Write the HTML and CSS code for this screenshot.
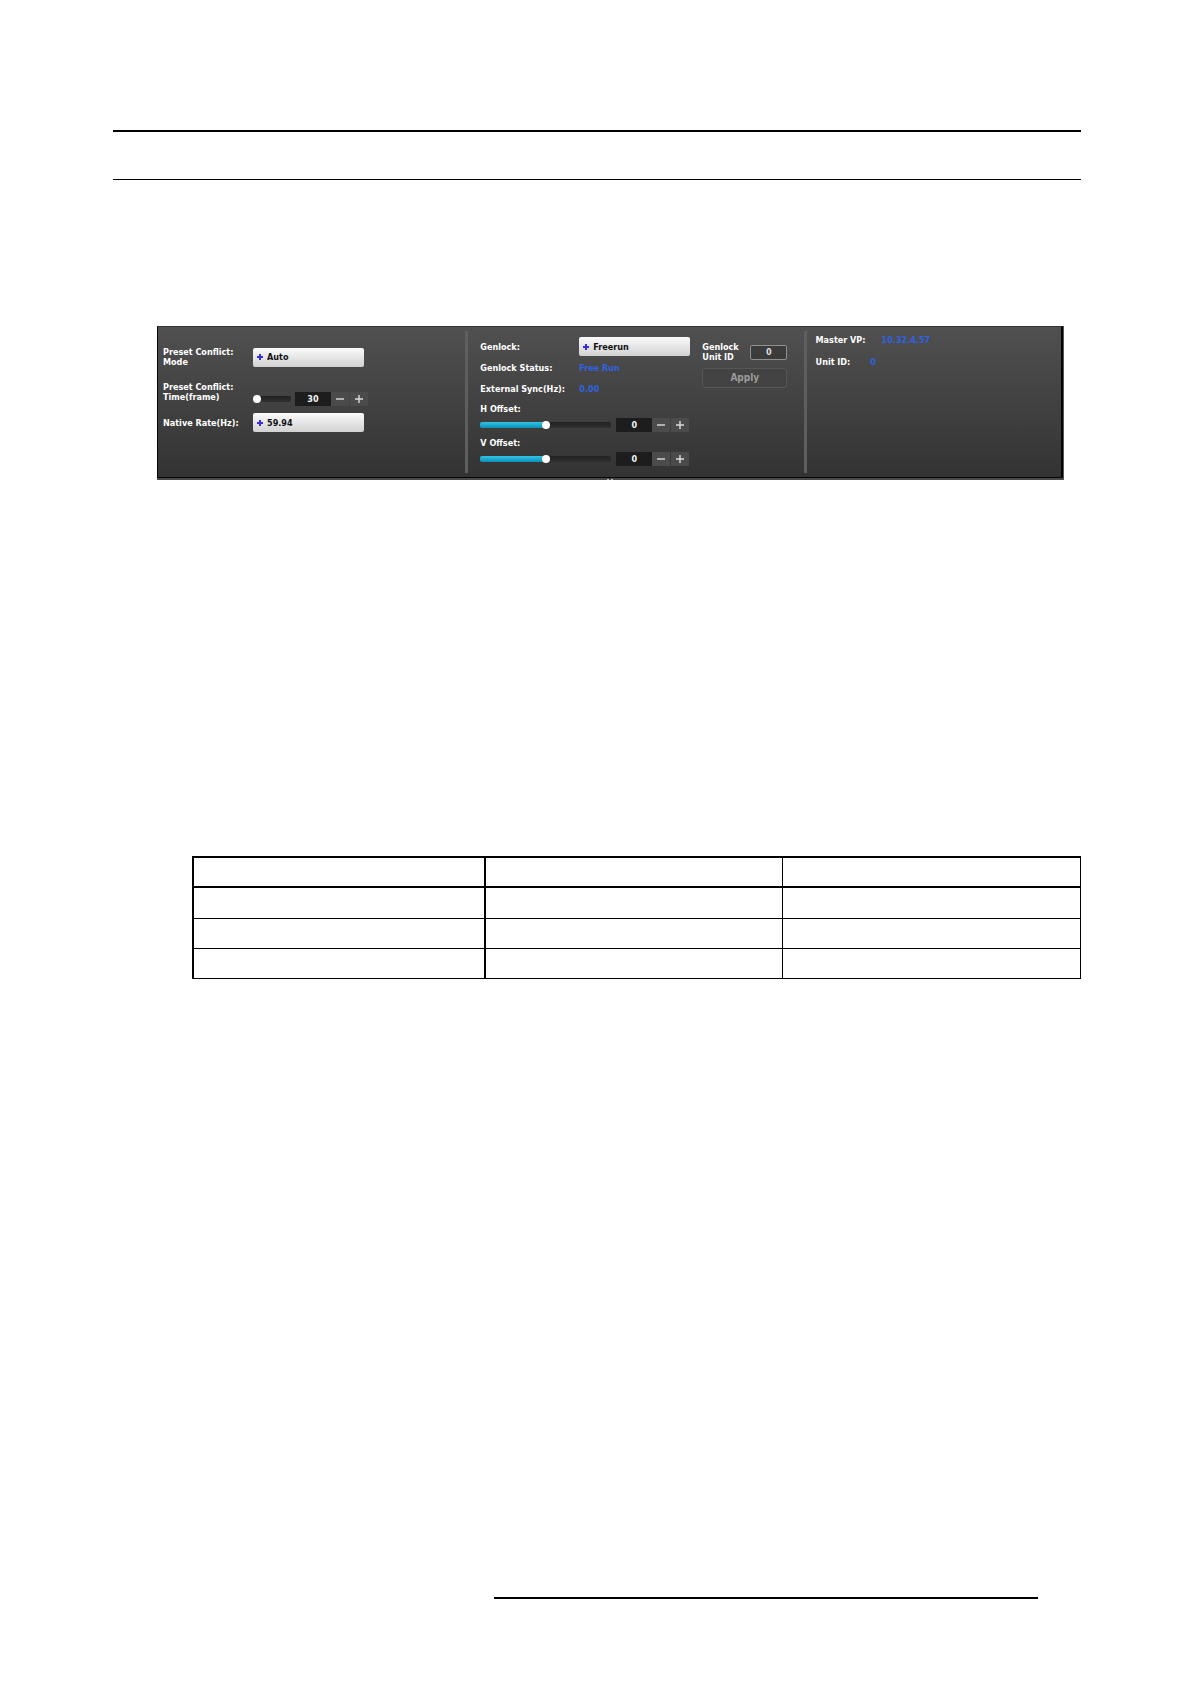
FILE: index.html
```html
<!DOCTYPE html>
<html lang="en">
<head>
    <meta charset="UTF-8">
    <meta name="viewport" content="width=device-width, initial-scale=1.0">
    <title>Genlock Settings</title>
    <link rel="stylesheet" href="styles.css">
</head>
<body>
    <header class="page-header"></header>

    <main>
        <section class="panel">
            <div class="columns">
                <div class="column preset">
                    <div class="row">
                        <label for="conflictMode">Preset Conflict:<br>Mode</label>
                        <div class="dropdown">
                            <svg class="plus" viewBox="0 0 6 6"><path d="M3 0v6M0 3h6"/></svg>
                            <select id="conflictMode"><option>Auto</option></select>
                        </div>
                    </div>
                    <div class="row row-time">
                        <label for="conflictTime">Preset Conflict:<br>Time(frame)</label>
                        <div class="stepper">
                            <input type="range" class="slider slider-short" min="0" max="100" value="0" aria-label="Preset conflict time">
                            <input type="text" class="number" id="conflictTime" value="30">
                            <button class="step" aria-label="Decrease"><svg viewBox="0 0 8 8"><path d="M0 4h8"/></svg></button>
                            <button class="step" aria-label="Increase"><svg viewBox="0 0 8 8"><path d="M0 4h8M4 0v8"/></svg></button>
                        </div>
                    </div>
                    <div class="row">
                        <label for="nativeRate">Native Rate(Hz):</label>
                        <div class="dropdown">
                            <svg class="plus" viewBox="0 0 6 6"><path d="M3 0v6M0 3h6"/></svg>
                            <select id="nativeRate"><option>59.94</option></select>
                        </div>
                    </div>
                </div>

                <div class="column genlock">
                    <div class="genlock-main">
                        <div class="row">
                            <label for="genlock">Genlock:</label>
                            <div class="dropdown">
                                <svg class="plus" viewBox="0 0 6 6"><path d="M3 0v6M0 3h6"/></svg>
                                <select id="genlock"><option>Freerun</option></select>
                            </div>
                        </div>
                        <div class="row">
                            <span>Genlock Status:</span>
                            <span class="value">Free Run</span>
                        </div>
                        <div class="row">
                            <span>External Sync(Hz):</span>
                            <span class="value">0.00</span>
                        </div>
                        <div class="offset">
                            <label for="hOffset">H Offset:</label>
                            <div class="stepper">
                                <input type="range" class="slider slider-half" min="0" max="100" value="50" aria-label="H offset slider">
                                <input type="text" class="number" id="hOffset" value="0">
                                <button class="step" aria-label="Decrease"><svg viewBox="0 0 8 8"><path d="M0 4h8"/></svg></button>
                                <button class="step" aria-label="Increase"><svg viewBox="0 0 8 8"><path d="M0 4h8M4 0v8"/></svg></button>
                            </div>
                        </div>
                        <div class="offset">
                            <label for="vOffset">V Offset:</label>
                            <div class="stepper">
                                <input type="range" class="slider slider-half" min="0" max="100" value="50" aria-label="V offset slider">
                                <input type="text" class="number" id="vOffset" value="0">
                                <button class="step" aria-label="Decrease"><svg viewBox="0 0 8 8"><path d="M0 4h8"/></svg></button>
                                <button class="step" aria-label="Increase"><svg viewBox="0 0 8 8"><path d="M0 4h8M4 0v8"/></svg></button>
                            </div>
                        </div>
                    </div>
                    <div class="unit">
                        <div class="unit-id">
                            <label for="unitId">Genlock<br>Unit ID</label>
                            <input type="text" class="unit-input" id="unitId" value="0">
                        </div>
                        <button class="apply" disabled>Apply</button>
                    </div>
                </div>

                <div class="column master">
                    <div class="info">
                        <span>Master VP:</span>
                        <span class="value">10.32.4.57</span>
                    </div>
                    <div class="info">
                        <span>Unit ID:</span>
                        <span class="value">0</span>
                    </div>
                </div>
            </div>
            <div class="grip">
                <svg viewBox="0 0 6 2"><path d="M0 2l1-1 1 1M4 2l1-1 1 1"/></svg>
            </div>
        </section>

        <table class="grid-table">
            <thead>
                <tr><th></th><th></th><th></th></tr>
            </thead>
            <tbody>
                <tr><td></td><td></td><td></td></tr>
                <tr><td></td><td></td><td></td></tr>
                <tr><td></td><td></td><td></td></tr>
            </tbody>
        </table>
    </main>

    <footer class="page-footer"></footer>
</body>
</html>
```
FILE: styles.css
```css
* {
    box-sizing: border-box;
}

body {
    margin: 0;
    padding: 130px 109px 85px 113px;
    min-height: 100vh;
    display: flex;
    flex-direction: column;
    background-color: white;
    font-family: "DejaVu Sans Condensed", "DejaVu Sans", sans-serif;
    font-size: 9px;
    font-weight: bold;
    line-height: 10px;
}

input, select, button {
    font: inherit;
    margin: 0;
    padding: 0;
}

.page-header {
    height: 50px;
    border-top: 2px solid black;
    border-bottom: 1px solid black;
}

.page-footer {
    margin: auto 43px 0 381px;
    border-top: 2px solid black;
}

/* Settings panel */
.panel {
    margin: 146px 17px 0 44px;
    background-color: #4a4a4a;
    border-right: 1px solid #555;
    color: #fff;
}

.columns {
    display: grid;
    grid-template-columns: 311fr 339fr 255fr;
    padding-bottom: 4px;
    background: linear-gradient(#505050, #333);
    border: 1px solid #333;
    border-right: 2px solid #050505;
    border-bottom: 1px solid #050505;
    border-left-color: #050505;
}

.column {
    margin-top: 4px;
    height: 142px;
}

.preset,
.genlock {
    border-right: 3px solid #5e5e5e;
}

.preset {
    padding: 16px 0 0 5px;
}

.row {
    display: grid;
    grid-template-columns: 90px 111px;
    align-items: center;
}

.row-time {
    align-items: start;
    margin: 15px 0 7px;
}

.row-time .stepper {
    margin-top: 10px;
}

.dropdown {
    display: flex;
    align-items: center;
    height: 19px;
    padding-left: 4px;
    border-radius: 2px;
    background: linear-gradient(#fafafa, #d2d2d2);
}

.plus {
    width: 6px;
    height: 6px;
    stroke: #3a2fe0;
    stroke-width: 2;
}

.dropdown select {
    flex: 1;
    height: 100%;
    padding-left: 4px;
    appearance: none;
    border: none;
    background: none;
    color: #111;
}

.value {
    color: #2f62e0;
}

/* Slider with number box and buttons */
.stepper {
    display: flex;
    align-items: center;
    height: 14px;
}

.slider {
    appearance: none;
    width: 131px;
    height: 6px;
    margin-right: 5px;
    flex-shrink: 0;
    border-radius: 2px;
    background: linear-gradient(#222, #303030);
}

.slider-short {
    width: 38px;
    margin-right: 4px;
}

.slider-half {
    background:
        linear-gradient(#35c3e6, #0a8fb5) left / 50% 100% no-repeat,
        linear-gradient(#222, #303030);
}

.slider::-webkit-slider-thumb {
    appearance: none;
    width: 8px;
    height: 8px;
    border-radius: 50%;
    background-color: white;
}

.number {
    width: 36px;
    height: 14px;
    flex-shrink: 0;
    border: none;
    background-color: #1d1d1d;
    color: #f2f2f2;
    text-align: center;
}

.step {
    display: flex;
    align-items: center;
    justify-content: center;
    width: 18px;
    height: 14px;
    flex-shrink: 0;
    border: none;
    background-color: #4b4b4b;
}

.step + .step {
    margin-left: 1px;
}

.step svg {
    width: 8px;
    height: 8px;
    stroke: #ddd;
    stroke-width: 1.4;
}

/* Genlock column */
.genlock {
    display: flex;
    gap: 12px;
    padding: 6px 0 0 12px;
}

.genlock-main {
    width: 210px;
}

.genlock-main .row {
    grid-template-columns: 99px 111px;
    line-height: 14px;
    margin-bottom: 7px;
}

.genlock-main .row:first-child {
    margin-bottom: 5px;
}

.offset {
    margin-bottom: 5px;
    line-height: 12px;
}

.offset label {
    display: block;
    margin-bottom: 3px;
}

.unit {
    width: 85px;
    padding-top: 5px;
}

.unit-id {
    display: flex;
    align-items: center;
    justify-content: space-between;
}

.unit-input {
    width: 37px;
    height: 15px;
    border: 1px solid #909090;
    border-radius: 2px;
    background-color: #3c3c3c;
    color: #ddd;
    text-align: center;
}

.apply {
    width: 100%;
    height: 20px;
    margin-top: 6px;
    border: 1px solid #565656;
    border-radius: 3px;
    background-color: #434343;
    color: #9c9c9c;
    font-size: 10px;
}

/* Master column */
.master {
    padding: 4px 0 0 9px;
}

.info {
    display: flex;
    gap: 16px;
    margin-bottom: 12px;
}

.info + .info {
    gap: 20px;
}

.grip {
    display: flex;
    justify-content: center;
    height: 2px;
}

.grip svg {
    width: 6px;
    height: 2px;
    fill: none;
    stroke: #bbb;
}

/* Bordered table */
.grid-table {
    width: calc(100% - 79px);
    margin: 376px 0 0 79px;
    table-layout: fixed;
    border-collapse: separate;
    border-spacing: 0;
    border-right: 1px solid black;
    border-bottom: 1px solid black;
}

.grid-table th,
.grid-table td {
    height: 30px;
    padding: 0;
    border-top: 1px solid black;
    border-left: 1px solid black;
}

.grid-table th,
.grid-table tbody tr:first-child td {
    border-top-width: 2px;
}

.grid-table tbody tr:first-child td {
    height: 32px;
}

.grid-table th:nth-child(-n+2),
.grid-table td:nth-child(-n+2) {
    border-left-width: 2px;
}

.grid-table th:first-child {
    width: 292px;
}
```
